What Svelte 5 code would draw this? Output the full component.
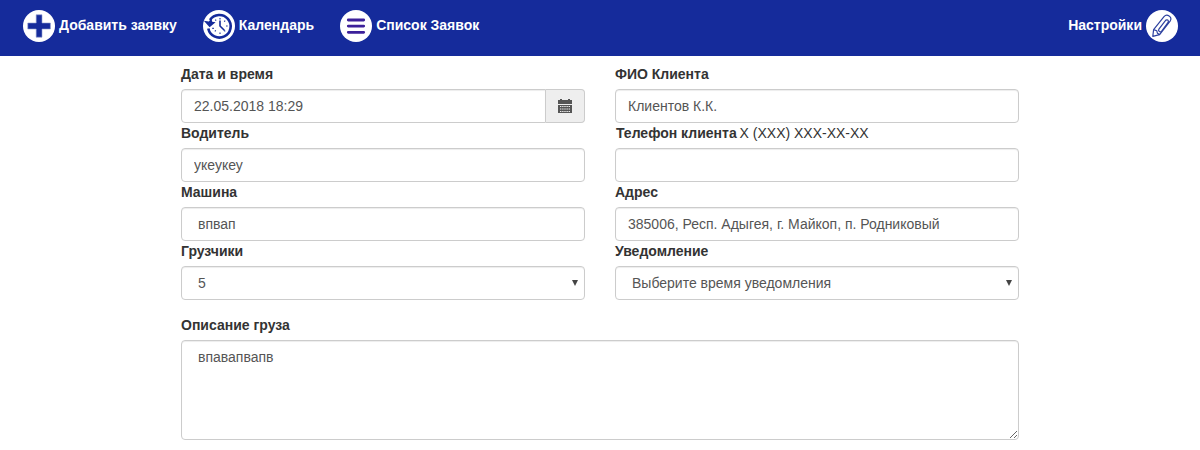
<script>
  let date = $state('22.05.2018 18:29');
  let driver = $state('укеукеу');
  let car = $state('впвап');
  let client = $state('Клиентов К.К.');
  let phone = $state('');
  let address = $state('385006, Респ. Адыгея, г. Майкоп, п. Родниковый');
  let cargo = $state('впавапвапв');
</script>

<nav>
  <div class="links">
    <a href="#add">
      <svg width="32" height="32" viewBox="0 0 32 32">
        <circle cx="16" cy="16" r="16" fill="#fff" />
        <path d="M13.2 4.8h5.8v8.2h8.4v6H19v8.2h-5.8V19H4.8v-6h8.4z" fill="#152b9b" stroke="#8f9bd0" stroke-width=".6" />
      </svg>
      <span>Добавить заявку</span>
    </a>
    <a href="#calendar">
      <svg width="32" height="32" viewBox="0 0 32 32">
        <circle cx="16" cy="16" r="16" fill="#fff" />
        <path d="M7 10A11.3 11.3 0 1 1 5.3 18.5" fill="none" stroke="#152b9b" stroke-width="2.6" />
        <path d="M.8 10.8l5 .8 2.6-3 .8 3.1 3.4.6-6 5z" fill="#152b9b" />
        <path d="M17 8v1.4M17 22.6V24M24.6 16h-1.5M22.2 10.6l-1 1M22.2 21.4l-1-1M11.8 21.4l1-1M12.4 9.7l.7.9M9.3 18.4h1.5" stroke="#152b9b" stroke-width="1.1" />
        <path d="M17 10.4V16l4.3 4.2" fill="none" stroke="#152b9b" stroke-width="1.6" />
      </svg>
      <span>Календарь</span>
    </a>
    <a href="#list">
      <svg width="32" height="32" viewBox="0 0 32 32">
        <circle cx="16" cy="16" r="16" fill="#fff" />
        <path d="M8.3 10h15.4M8.3 16.1h15.4M8.3 22.3h15.4" stroke="#3c209a" stroke-width="2.8" stroke-linecap="round" />
      </svg>
      <span>Список Заявок</span>
    </a>
  </div>
  <a href="#settings">
    <span>Настройки</span>
    <svg width="32" height="32" viewBox="0 0 32 32">
      <circle cx="16" cy="16" r="16" fill="#fff" />
      <path d="M7.6 19.6L18 6.6c3-3.4 8.5.2 6.3 4.2L13.6 24.6 6.8 26.4zM7.6 19.6l3.2 1.2.6 2.4 2.2 1.4M19.8 10.2l-6.9 9c-1.2 1.8 1.4 3.6 2.8 1.8l6.2-8.3c1.4-2.2-.8-4.2-2.8-1.8" fill="none" stroke="#2d419f" stroke-width="1.2" stroke-linejoin="round" />
    </svg>
  </a>
</nav>

<form>
  <div class="columns">
    <div class="column">
      <label for="date">Дата и время</label>
      <div class="group">
        <input id="date" bind:value={date} />
        <span class="addon">
          <svg width="14" height="14" viewBox="0 0 14 14">
            <path d="M0 1h2V0h2v1h6V0h2v1h2v4H0zM0 6h14v8H0z" fill="#555" />
            <path d="M2 7.5h10M2 10h10M2 12.5h10" stroke="#eee" stroke-width="1" stroke-dasharray="1.4 .75" />
          </svg>
        </span>
      </div>
      <label for="driver">Водитель</label>
      <input id="driver" bind:value={driver} />
      <label for="car">Машина</label>
      <input id="car" class="inset" bind:value={car} />
      <label for="loaders">Грузчики</label>
      <div class="select">
        <select id="loaders"><option>5</option></select>
        <svg width="6" height="6" viewBox="0 0 6 6"><path d="M0 0h6L3 6z" fill="#444" /></svg>
      </div>
    </div>
    <div class="column">
      <label for="client">ФИО Клиента</label>
      <input id="client" bind:value={client} />
      <label for="phone" class="phone">Телефон клиента <span>X (XXX) XXX-XX-XX</span></label>
      <input id="phone" bind:value={phone} />
      <label for="address">Адрес</label>
      <input id="address" bind:value={address} />
      <label for="notice">Уведомление</label>
      <div class="select">
        <select id="notice"><option>Выберите время уведомления</option></select>
        <svg width="6" height="6" viewBox="0 0 6 6"><path d="M0 0h6L3 6z" fill="#444" /></svg>
      </div>
    </div>
  </div>
  <div class="cargo">
    <label for="cargo">Описание груза</label>
    <textarea id="cargo" bind:value={cargo}></textarea>
  </div>
</form>

<style>
  :global(body) {
    margin: 0;
    background: #fff;
    overflow: hidden;
  }
  nav, form, input, select, textarea {
    font: 14px/20px "Liberation Sans", Arial, sans-serif;
  }
  nav {
    box-sizing: border-box;
    height: 56px;
    padding: 0 22px 4px 23px;
    display: flex;
    align-items: center;
    justify-content: space-between;
    background: #152b9b;
  }
  .links {
    display: flex;
    gap: 26px;
  }
  nav a {
    display: flex;
    align-items: center;
    gap: 4px;
    color: #fff;
    font-weight: bold;
    text-decoration: none;
  }
  nav a span {
    padding-bottom: 2px;
  }
  nav svg {
    display: block;
  }
  form {
    width: 838px;
    margin: 0 auto;
    padding-top: 8px;
    color: #333;
  }
  .columns {
    display: grid;
    grid-template-columns: 404px 404px;
    gap: 30px;
  }
  label {
    display: block;
    height: 20px;
    margin-bottom: 5px;
    font-weight: bold;
  }
  label span {
    margin-left: -1px;
    font-weight: normal;
  }
  .phone {
    padding-left: 1px;
  }
  input, select, textarea {
    display: block;
    box-sizing: border-box;
    width: 100%;
    height: 34px;
    margin: 0;
    padding: 6px 12px;
    color: #555;
    background: #fff;
    border: 1px solid #ccc;
    border-radius: 4px;
    box-shadow: inset 0 1px 1px rgba(0, 0, 0, .075);
    outline: none;
  }
  .inset, textarea {
    padding-left: 16px;
  }
  .group {
    display: flex;
  }
  .group input {
    flex: 1;
    border-radius: 4px 0 0 4px;
  }
  .addon {
    box-sizing: border-box;
    width: 39px;
    display: flex;
    align-items: center;
    justify-content: center;
    background: #eee;
    border: 1px solid #ccc;
    border-left: 0;
    border-radius: 0 4px 4px 0;
  }
  .select {
    display: grid;
    align-items: center;
  }
  .select > * {
    grid-area: 1 / 1;
  }
  .select svg {
    justify-self: end;
    margin: 0 7px 1px 0;
    pointer-events: none;
  }
  select {
    appearance: none;
    padding-left: 16px;
  }
  .cargo {
    margin-top: 15px;
  }
  textarea {
    height: 100px;
    resize: vertical;
  }
</style>
